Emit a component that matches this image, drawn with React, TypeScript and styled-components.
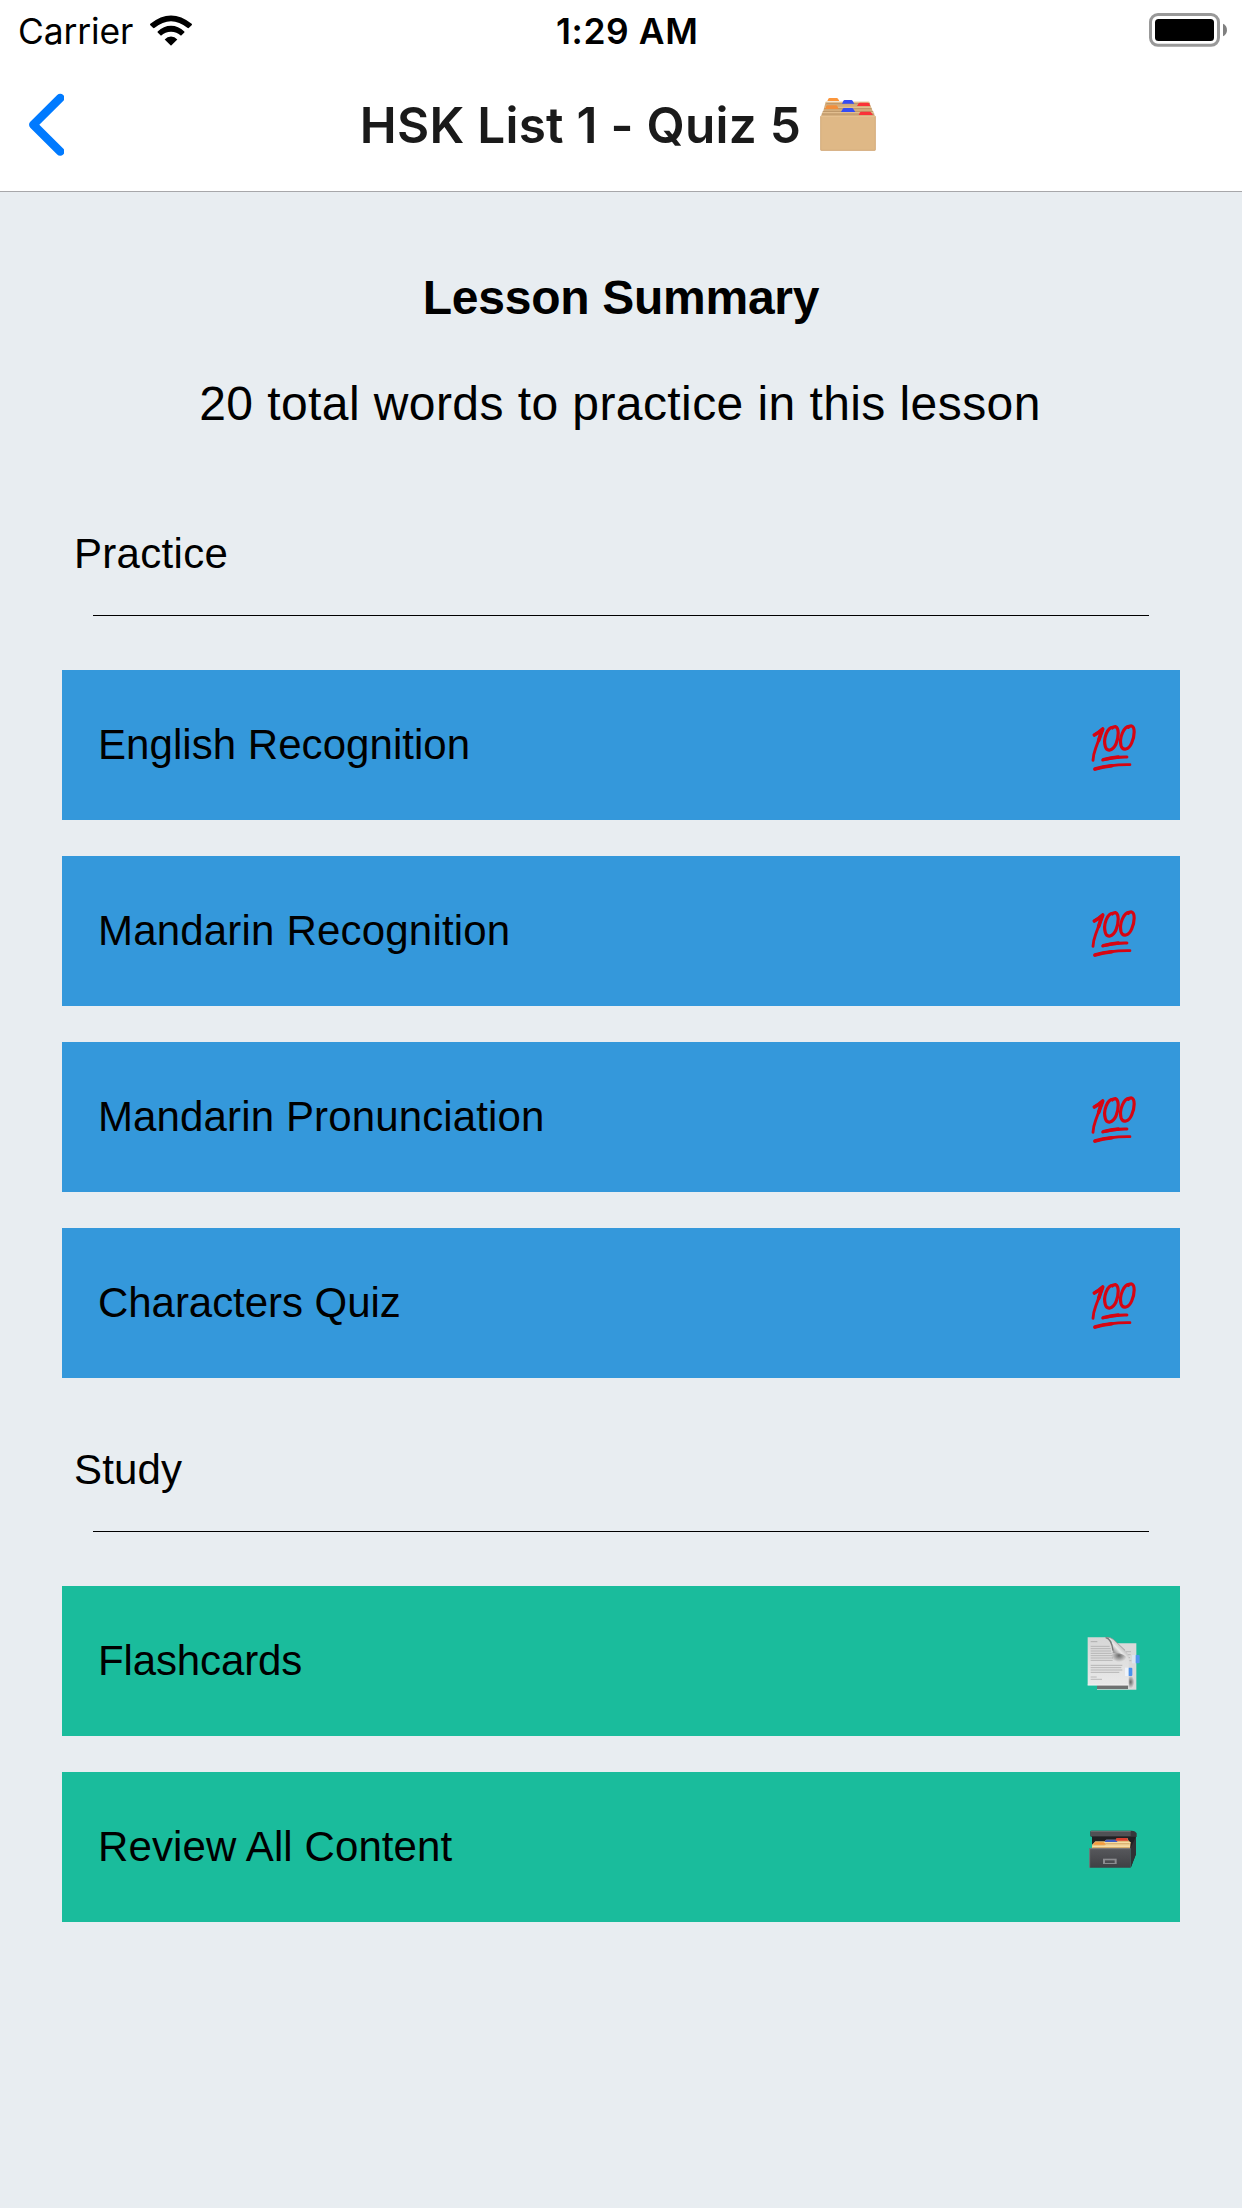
import React from "react";
import styled, { createGlobalStyle } from "styled-components";

const Global = createGlobalStyle`
  *, *::before, *::after { box-sizing: border-box; }
  body { margin: 0; background: #e8edf1; }
`;

const helvetica = `"Liberation Sans", Arial, sans-serif`;
const system = `Inter, "Liberation Sans", sans-serif`;

const Screen = styled.div`
  display: flex;
  flex-direction: column;
  width: 1242px;
  height: 2208px;
  background: #e8edf1;
  color: #000;
  font-family: ${helvetica};
  overflow: hidden;
`;

const Header = styled.header`
  height: 192px;
  background: #fff;
  border-bottom: 1px solid #a7a7aa;
`;

const StatusBar = styled.div`
  display: grid;
  grid-template-columns: 538px auto 1fr;
  align-items: center;
  height: 60px;
  padding: 0 14px 0 18px;
  font-family: ${system};
  font-size: 35.4px;
`;

const Carrier = styled.div`
  display: flex;
  align-items: center;
  gap: 17px;
`;

const CarrierName = styled.span`
  padding-top: 2px;
  letter-spacing: -0.1px;
`;

const Clock = styled.time`
  padding-top: 2px;
  font-weight: 600;
  letter-spacing: 0.6px;
`;

const BatterySlot = styled.div`
  display: flex;
  justify-content: flex-end;
`;

const NavBar = styled.nav`
  display: grid;
  grid-template-columns: 1fr auto 1fr;
  align-items: center;
  height: 130px;
  padding: 0 28px;
`;

const BackButton = styled.button`
  display: flex;
  justify-self: start;
  padding: 0;
  border: 0;
  background: none;
`;

const NavTitle = styled.h1`
  display: flex;
  align-items: center;
  gap: 19px;
  margin: 0;
  color: #1a1a1a;
  font-family: ${system};
  font-size: 49.5px;
  font-weight: 600;
  letter-spacing: 0.25px;
  white-space: nowrap;
`;

const Content = styled.main`
  display: flex;
  flex-direction: column;
  padding: 0 62px;
`;

const Summary = styled.section`
  display: flex;
  flex-direction: column;
  align-items: center;
  padding-top: 78px;
  font-size: 48px;
  line-height: 56px;
`;

const SummaryTitle = styled.h2`
  margin: 0 0 50px;
  font-size: inherit;
  font-weight: 700;
  letter-spacing: -0.27px;
`;

const SummaryText = styled.p`
  margin: 0;
  padding-right: 2px;
  letter-spacing: 0.42px;
`;

const SectionTitle = styled.h3<{ $top: number; $tracking: number }>`
  margin: ${(p) => p.$top}px 0 0 12px;
  font-size: 42px;
  font-weight: 400;
  line-height: 50px;
  letter-spacing: ${(p) => p.$tracking}px;
`;

const Divider = styled.hr`
  width: 1056px;
  height: 1px;
  margin: 36px auto 54px;
  border: 0;
  background: #000;
`;

const List = styled.div`
  display: flex;
  flex-direction: column;
  gap: 36px;
`;

const Row = styled.button<{ $color: string }>`
  display: flex;
  align-items: center;
  justify-content: space-between;
  height: 150px;
  padding: 0 35px 0 36px;
  border: 0;
  background: ${(p) => p.$color};
  color: #000;
  font-family: inherit;
  font-size: 42px;
  text-align: left;
`;

const Label = styled.span<{ $tracking: number }>`
  letter-spacing: ${(p) => p.$tracking}px;
`;

const WifiIcon = () => (
  <svg width="42" height="31" viewBox="450 43.5 126 93" fill="#000">
    <path d="M451 70 Q482 45 513 45 T575 70 Q577 72 575 74 L567 82 Q565 84 562 82 Q538 62 513 62 T464 82 Q461 84 459 82 L451 74 Q449 72 451 70 Z" />
    <path d="M473 93 Q491 76 513 76 T553 93 Q554 95 553 96 L543 106 Q530 94 513 94 T483 106 L473 96 Q472 95 473 93 Z" />
    <path d="M494 117 Q502 108 513 108 T532 117 L514.500 134 Q513 135.500 511.500 134 Z" />
  </svg>
);

const BatteryIcon = () => (
  <svg width="80" height="36" viewBox="1148 12 80 36">
    <rect x="1150.500" y="14.500" width="68" height="30.800" rx="7.500" fill="none" stroke="#999" strokeWidth="3" />
    <rect x="1155" y="19" width="59" height="22" rx="3.500" fill="#000" />
    <path d="M1223 23.800 C1228.300 25.500 1228.300 34.500 1223 36.200 Z" fill="#808080" />
  </svg>
);

const ChevronIcon = () => (
  <svg width="36" height="64" viewBox="28 93 36 64" fill="none" stroke="#007aff" strokeWidth="8.500" strokeLinecap="round" strokeLinejoin="round">
    <path d="M60.200 98 L33.300 124.700 L60.200 151.500" />
  </svg>
);

const DividersIcon = () => (
  <svg width="62" height="60" viewBox="60 45 186 180">
    <path d="M77 65 H207 L213 80 L220 98 L226 110 H62 L70 92 Z" fill="#d3ad7c" />
    <path d="M79 71 H210 M73 86 H215 M68 95 H220 M65 102 H223" stroke="#b58f63" strokeWidth="2.500" />
    <path d="M78 67 H209 M74 82 H213 M67 98 H222" stroke="#e9c799" strokeWidth="2.500" />
    <path d="M82 63 L85 56 Q86 54 89 54 H110 Q113 54 114 56 L118 63 Z" fill="#fb963b" />
    <path d="M126 71 L130 63 Q131 60 134 60 H154 Q157 60 158 63 L163 71 Z" fill="#344cf5" />
    <path d="M171 78 L176 70 Q177 68 180 68 H203 Q206 68 207 70 L211 78 Z" fill="#fa3238" />
    <path d="M75 87 L79 78 Q80 76 83 76 H108 Q111 76 112 78 L116 87 Z" fill="#f28f3c" />
    <path d="M123 96 L128 87 Q129 84 132 84 H156 Q159 84 160 87 L166 96 Z" fill="#344cf5" />
    <path d="M176 105 L180 97 Q181 95 184 95 H209 Q212 95 213 97 L219 105 Z" fill="#fa3238" />
    <path d="M61 108 H227 V209 Q227 212 224 212 H64 Q61 212 61 209 Z" fill="#dfb886" />
    <path d="M61 109 H227" stroke="#e9c799" strokeWidth="2" />
    <path d="M62 110 V209 Q62 211 65 211 H223 Q226 211 226 209 V110" fill="none" stroke="#cda374" strokeWidth="2" />
  </svg>
);

const HundredIcon = () => (
  <svg width="60" height="60" viewBox="45 45 180 180" fill="none" stroke="#d60512" strokeLinecap="round" strokeLinejoin="round">
    <path d="M73 105 Q86 98 98 87 Q87 118 77 145 Q70 164 69 181" strokeWidth="8.500" />
    <path d="M73 105 Q86 98 98 87 Q92 103 86 121" strokeWidth="11" />
    <path d="M128 82 C112 82 99 116 106 140 C111 156 128 153 138 132 C147 110 147 84 137 80 Q132 79 127 84" strokeWidth="9.500" />
    <path d="M177 79 C162 79 147 113 153 137 C158 154 176 150 185 129 C195 106 195 81 185 78 Q180 77 175 82" strokeWidth="9.500" />
    <path d="M98 180 Q132 170 171 171" strokeWidth="8.500" />
    <path d="M100 179 Q124 173 145 171" strokeWidth="10" />
    <path d="M74 208 Q119 193 180 194" strokeWidth="8" />
    <path d="M75 207 Q98 200 126 197" strokeWidth="10.500" />
  </svg>
);

const PagesIcon = () => (
  <svg width="60" height="60" viewBox="45 33 180 180">
    <defs>
      <linearGradient id="sheet" x1="0" y1="0" x2="0" y2="1">
        <stop offset="0" stopColor="#d6d6d6" />
        <stop offset="1" stopColor="#e9e9e9" />
      </linearGradient>
      <linearGradient id="curl" gradientUnits="userSpaceOnUse" x1="128" y1="92" x2="152" y2="70">
        <stop offset="0" stopColor="#9a9a9a" />
        <stop offset="0.450" stopColor="#e9e9e9" />
        <stop offset="1" stopColor="#b4b4b4" />
      </linearGradient>
      <radialGradient id="shade">
        <stop offset="0" stopColor="#444" stopOpacity="0.750" />
        <stop offset="1" stopColor="#444" stopOpacity="0" />
      </radialGradient>
    </defs>
    <path d="M81 70 H199 V209 H81 Z" fill="#dadada" />
    <path d="M81 194 H174 V207 H81 Z" fill="#6f7171" />
    <ellipse cx="182" cy="186" rx="11" ry="19" fill="url(#shade)" />
    <path d="M168 95 H183 M172 104 H182 M174 113 H180 M178 122 H184" stroke="#b9b9b9" strokeWidth="3" />
    <path d="M53 52 H107 Q122 54 126 72 Q128 98 138 97 Q166 100 176 119 V196 H53 Z" fill="url(#sheet)" />
    <path d="M53 195 H176" stroke="#f5f5f5" strokeWidth="2.500" />
    <path d="M62 65 H82" stroke="#999" strokeWidth="2" />
    <path d="M62 79 H119 M62 86 H122 M62 93 H123 M62 100 H125 M62 107 H127 M62 114 H129 M62 121 H128 M62 136 H157 M62 143 H154 M62 150 H157 M62 157 H148" stroke="#b1b1b1" strokeWidth="2.800" />
    <path d="M62 171 H80 M62 178 H96" stroke="#a3a3a3" strokeWidth="2" />
    <ellipse cx="147" cy="107" rx="24" ry="19" fill="url(#shade)" />
    <path d="M107 52 Q122 55 127 72 Q131 88 128 99 Q163 96 176 119 Q178 103 165 91 L130 58 Q122 51 107 52 Z" fill="url(#curl)" />
    <path d="M107 52.500 Q125 57 129 92" fill="none" stroke="#787878" strokeWidth="4" />
    <path d="M107 52 Q122 51 130 58 L165 91" fill="none" stroke="#8d8d8d" strokeWidth="2" />
    <path d="M186 105 H198 V130 H186 Z" fill="#dce6f2" />
    <path d="M197 105 H206 Q209 105 209 108 V127 Q209 130 206 130 H197 Z" fill="#5196ee" />
    <path d="M165 143 H176 V168 H165 Z" fill="#eef3fa" />
    <path d="M176 143 H184 Q187 143 187 146 V165 Q187 168 184 168 H176 Z" fill="#4b91ec" />
  </svg>
);

const FileBoxIcon = () => (
  <svg width="60" height="60" viewBox="45 21 180 180">
    <defs>
      <linearGradient id="front" x1="0" y1="0" x2="0" y2="1">
        <stop offset="0" stopColor="#57585c" />
        <stop offset="1" stopColor="#3f4044" />
      </linearGradient>
    </defs>
    <path d="M66 78 H190 L198 74 V132 L183 172 V116 L66 116 Z" fill="#202124" />
    <path d="M181 115 L198 80 V132 L182 173 Z" fill="#303135" />
    <path d="M76 94 H104 L109 89 H138 L141 84 H172 L176 92 L182 97 L180 117 H66 V104 Z" fill="#e2bd7c" />
    <path d="M104 96 L108 89 H138 L143 97 Z" fill="#3e5cc2" />
    <path d="M136 92 L140 84 H171 L175 92 Z" fill="#db4030" />
    <path d="M98 98 H181 M104 105 H180 M67 109 H180" stroke="#f6dda4" strokeWidth="3.500" />
    <path d="M106 101 H178 M68 113 H179" stroke="#c99d59" strokeWidth="1.500" />
    <path d="M70 104 L75 97 H102 L108 104 Z" fill="#f59a3b" />
    <path d="M61 65 Q61 62 64 62 H185 Q197 63 200 70 V81 L190 80 H64 Q61 80 61 77 Z" fill="#37383b" />
    <path d="M62 64 H182 V78 H62 Z" fill="#505155" />
    <path d="M62 64 H182" stroke="#77787c" strokeWidth="2.500" />
    <path d="M58 115 H182 V173 H61 Q58 173 58 170 Z" fill="url(#front)" />
    <path d="M59 173 V116 H181" fill="none" stroke="#7c7d80" strokeWidth="2.500" />
    <path d="M99 146 H140 V162 H99 Z" fill="#8b8c90" />
    <path d="M105 151 H134 V159 H105 Z" fill="#4b4c50" />
  </svg>
);

const practice = [
  { label: "English Recognition", tracking: 0.05 },
  { label: "Mandarin Recognition", tracking: 0.19 },
  { label: "Mandarin Pronunciation", tracking: 0.13 },
  { label: "Characters Quiz", tracking: -0.05 },
];

const study = [
  { label: "Flashcards", tracking: -0.12, Icon: PagesIcon },
  { label: "Review All Content", tracking: 0.1, Icon: FileBoxIcon },
];

export default function App() {
  return (
    <>
      <Global />
      <Screen>
        <Header>
          <StatusBar>
            <Carrier>
              <CarrierName>Carrier</CarrierName>
              <WifiIcon />
            </Carrier>
            <Clock>1:29 AM</Clock>
            <BatterySlot>
              <BatteryIcon />
            </BatterySlot>
          </StatusBar>
          <NavBar>
            <BackButton aria-label="Back">
              <ChevronIcon />
            </BackButton>
            <NavTitle>
              <span>HSK List 1 - Quiz 5</span>
              <DividersIcon />
            </NavTitle>
          </NavBar>
        </Header>
        <Content>
          <Summary>
            <SummaryTitle>Lesson Summary</SummaryTitle>
            <SummaryText>20 total words to practice in this lesson</SummaryText>
          </Summary>
          <SectionTitle $top={97} $tracking={0.3}>Practice</SectionTitle>
          <Divider />
          <List>
            {practice.map(({ label, tracking }) => (
              <Row key={label} $color="#3498db">
                <Label $tracking={tracking}>{label}</Label>
                <HundredIcon />
              </Row>
            ))}
          </List>
          <SectionTitle $top={67} $tracking={0.15}>Study</SectionTitle>
          <Divider />
          <List>
            {study.map(({ label, tracking, Icon }) => (
              <Row key={label} $color="#1abc9c">
                <Label $tracking={tracking}>{label}</Label>
                <Icon />
              </Row>
            ))}
          </List>
        </Content>
      </Screen>
    </>
  );
}
